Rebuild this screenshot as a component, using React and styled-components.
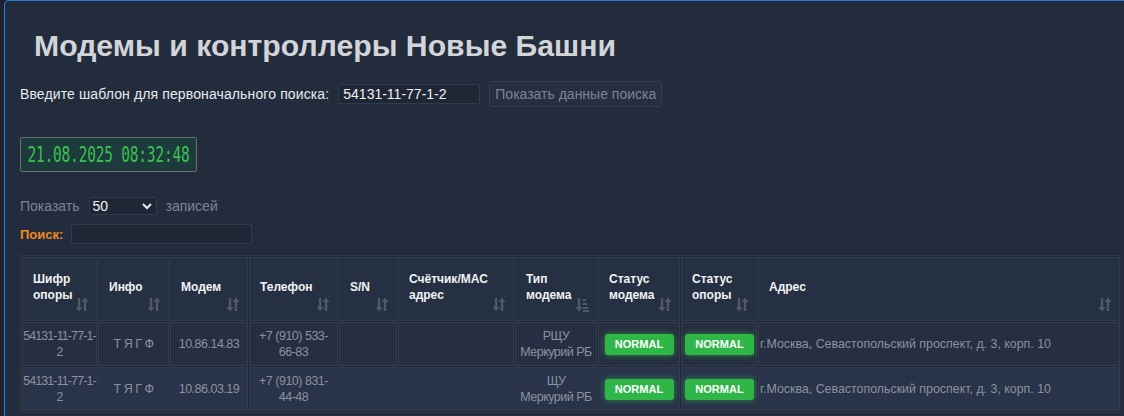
import React from "react";
import styled, { createGlobalStyle } from "styled-components";

const GlobalStyle = createGlobalStyle`
  html, body {
    margin: 0;
    padding: 0;
    background: #1b2230;
    font-family: "Liberation Sans", Arial, sans-serif;
    overflow: hidden;
  }
`;

const Page = styled.div`
  padding-left: 4px;
  height: 416px;
`;

const Panel = styled.div`
  background: #232c3d;
  border-top: 1px solid #2a7fd6;
  border-left: 1px solid #2a7fd6;
  border-top-left-radius: 5px;
  padding: 0 0 0 15px;
  width: 1140px;
  height: 430px;
  box-sizing: border-box;
`;

const Title = styled.h1`
  margin: 0;
  padding: 27px 0 0 14px;
  font-size: 30.2px;
  line-height: 36px;
  font-weight: 700;
  color: #d2d4d8;
`;

const SearchRow = styled.div`
  display: flex;
  align-items: center;
  margin-top: 17px;
  height: 26px;
  font-size: 14px;
  color: #e8eaee;
`;

const Label = styled.span`
  margin-right: 9px;
  letter-spacing: 0.12px;
`;

const TextInput = styled.div`
  width: ${(p) => p.$w}px;
  height: 20px;
  box-sizing: border-box;
  background: #1f2736;
  border: 1px solid #303b4c;
  border-radius: 2px;
  padding: 0 4px;
  font-size: 14px;
  line-height: 18px;
  color: #f2f2f2;
`;

const Button = styled.div`
  margin-left: 9px;
  height: 26px;
  box-sizing: border-box;
  border: 1px solid #333e4f;
  border-radius: 3px;
  background: #252f40;
  padding: 0 5px;
  font-size: 14px;
  line-height: 24px;
  color: #7c8494;
`;

const Clock = styled.div`
  margin-top: 30px;
  width: 177px;
  height: 35px;
  box-sizing: border-box;
  border: 1px solid #6c7070;
  border-radius: 2px;
  background: #1d3a3c;
  display: flex;
  align-items: center;
  justify-content: center;
`;

const ClockText = styled.span`
  display: inline-block;
  font-family: "DejaVu Sans Mono", "Liberation Mono", monospace;
  font-size: 14.5px;
  letter-spacing: -0.2px;
  color: #3cc04f;
  transform: scaleY(1.45);
`;

const LengthRow = styled.div`
  display: flex;
  align-items: center;
  margin-top: 25px;
  font-size: 14px;
  color: #7c8494;
  height: 18px;
`;

const Select = styled.div`
  margin: 0 9px;
  width: 68px;
  height: 18px;
  box-sizing: border-box;
  background: #1f2736;
  border: 1px solid #303b4c;
  border-radius: 2px;
  padding: 0 3px;
  display: flex;
  align-items: center;
  justify-content: space-between;
  color: #eef0f3;
  font-size: 14px;
`;

const FilterRow = styled.div`
  display: flex;
  align-items: center;
  margin-top: 9px;
  height: 20px;
`;

const FilterLabel = styled.span`
  color: #f08a1c;
  font-weight: 700;
  font-size: 13px;
  margin-right: 8px;
`;

const Table = styled.table`
  margin-top: 11px;
  border-collapse: separate;
  border-spacing: 1px;
  border: 1px solid #2d3748;
  width: 1102px;
  table-layout: fixed;
  background: #202938;
`;

const Th = styled.th`
  position: relative;
  height: 64px;
  box-sizing: border-box;
  border: 1px solid #323c4d;
  background: #263043;
  color: #f1f2f4;
  font-size: 12px;
  font-weight: 700;
  line-height: 16px;
  text-align: left;
  vertical-align: middle;
  padding: 0 14px 4px 10px;
`;

const SortIcon = styled.span`
  position: absolute;
  right: 7px;
  bottom: 8px;
  display: flex;
  color: #4f5968;
`;

const Td = styled.td`
  border: 1px solid #323c4d;
  background: ${(p) => (p.$alt ? "#29344a" : "#252f41")};
  color: #8b929d;
  font-size: 12.5px;
  letter-spacing: -0.5px;
  line-height: 16px;
  text-align: center;
  padding: 0 3px;
  height: 44px;
  box-sizing: border-box;
  vertical-align: middle;
`;

const CodeTd = styled(Td)`
  font-size: 12.3px;
  letter-spacing: -0.8px;
  padding: 0;
`;

const AddressTd = styled(Td)`
  font-size: 12.4px;
  letter-spacing: 0;
  text-align: left;
  padding: 0 1px;
  white-space: nowrap;
`;

const Badge = styled.span`
  display: inline-block;
  width: 69px;
  height: 21px;
  line-height: 21px;
  border-radius: 3px;
  background: #2eb646;
  color: #ffffff;
  font-size: 11px;
  letter-spacing: 0;
  font-weight: 700;
  text-align: center;
  box-shadow: 0 0 6px rgba(60, 210, 80, 0.55);
`;

const SortBoth = () => (
  <svg width="14" height="15" viewBox="0 0 14 15">
    <path d="M4 1v10" stroke="currentColor" strokeWidth="2.4" />
    <path d="M0.5 10h7L4 14.5z" fill="currentColor" />
    <path d="M10 14V4" stroke="currentColor" strokeWidth="2.4" />
    <path d="M6.5 5h7L10 0.5z" fill="currentColor" />
  </svg>
);

const SortAmount = () => (
  <svg width="14" height="15" viewBox="0 0 14 15">
    <path d="M4 1v10" stroke="currentColor" strokeWidth="2.4" />
    <path d="M0.5 10h7L4 14.5z" fill="currentColor" />
    <rect x="8" y="2" width="3" height="2" fill="currentColor" />
    <rect x="8" y="6" width="4" height="2" fill="currentColor" />
    <rect x="8" y="10" width="5" height="2" fill="currentColor" />
    <rect x="8" y="13" width="6" height="2" fill="currentColor" />
  </svg>
);

const Chevron = () => (
  <svg width="12" height="10" viewBox="0 0 12 10">
    <path d="M2 3l4 4 4-4" stroke="#e8eaee" strokeWidth="2" fill="none" />
  </svg>
);

const columns = [
  { title: ["Шифр", "опоры"], w: 75 },
  { title: ["Инфо"], w: 71 },
  { title: ["Модем"], w: 78 },
  { title: ["Телефон"], w: 89 },
  { title: ["S/N"], w: 58 },
  { title: ["Счётчик/MAC", "адрес"], w: 116 },
  { title: ["Тип", "модема"], w: 82, amount: true },
  { title: ["Статус", "модема"], w: 82 },
  { title: ["Статус", "опоры"], w: 76 },
  { title: ["Адрес"] },
];

const rows = [
  {
    code: "54131-11-77-1-2",
    modem: "10.86.14.83",
    phone: "+7 (910) 533-66-83",
    type: ["РЩУ", "Меркурий РБ"],
  },
  {
    code: "54131-11-77-1-2",
    modem: "10.86.03.19",
    phone: "+7 (910) 831-44-48",
    type: ["ЩУ", "Меркурий РБ"],
  },
];

const address = "г.Москва, Севастопольский проспект, д. 3, корп. 10";

export default function App() {
  return (
    <>
      <GlobalStyle />
      <Page>
        <Panel>
          <Title>Модемы и контроллеры Новые Башни</Title>
          <SearchRow>
            <Label>Введите шаблон для первоначального поиска:</Label>
            <TextInput $w={142}>54131-11-77-1-2</TextInput>
            <Button>Показать данные поиска</Button>
          </SearchRow>
          <Clock>
            <ClockText>21.08.2025 08:32:48</ClockText>
          </Clock>
          <LengthRow>
            Показать
            <Select>
              50
              <Chevron />
            </Select>
            записей
          </LengthRow>
          <FilterRow>
            <FilterLabel>Поиск:</FilterLabel>
            <TextInput $w={181} />
          </FilterRow>
          <Table>
            <colgroup>
              {columns.map((c, i) => (
                <col key={i} style={c.w ? { width: c.w } : undefined} />
              ))}
            </colgroup>
            <thead>
              <tr>
                {columns.map((c, i) => (
                  <Th key={i}>
                    {c.title.map((t, j) => (
                      <div key={j}>{t}</div>
                    ))}
                    <SortIcon>{c.amount ? <SortAmount /> : <SortBoth />}</SortIcon>
                  </Th>
                ))}
              </tr>
            </thead>
            <tbody>
              {rows.map((r, i) => {
                const alt = i === 1;
                return (
                  <tr key={i}>
                    <CodeTd $alt={alt}>{r.code}</CodeTd>
                    <Td $alt={alt}>Т Я Г Ф</Td>
                    <Td $alt={alt}>{r.modem}</Td>
                    <Td $alt={alt}>{r.phone}</Td>
                    <Td $alt={alt} />
                    <Td $alt={alt} />
                    <Td $alt={alt}>
                      {r.type[0]}
                      <br />
                      {r.type[1]}
                    </Td>
                    <Td $alt={alt}>
                      <Badge>NORMAL</Badge>
                    </Td>
                    <Td $alt={alt}>
                      <Badge>NORMAL</Badge>
                    </Td>
                    <AddressTd $alt={alt}>{address}</AddressTd>
                  </tr>
                );
              })}
            </tbody>
          </Table>
        </Panel>
      </Page>
    </>
  );
}
